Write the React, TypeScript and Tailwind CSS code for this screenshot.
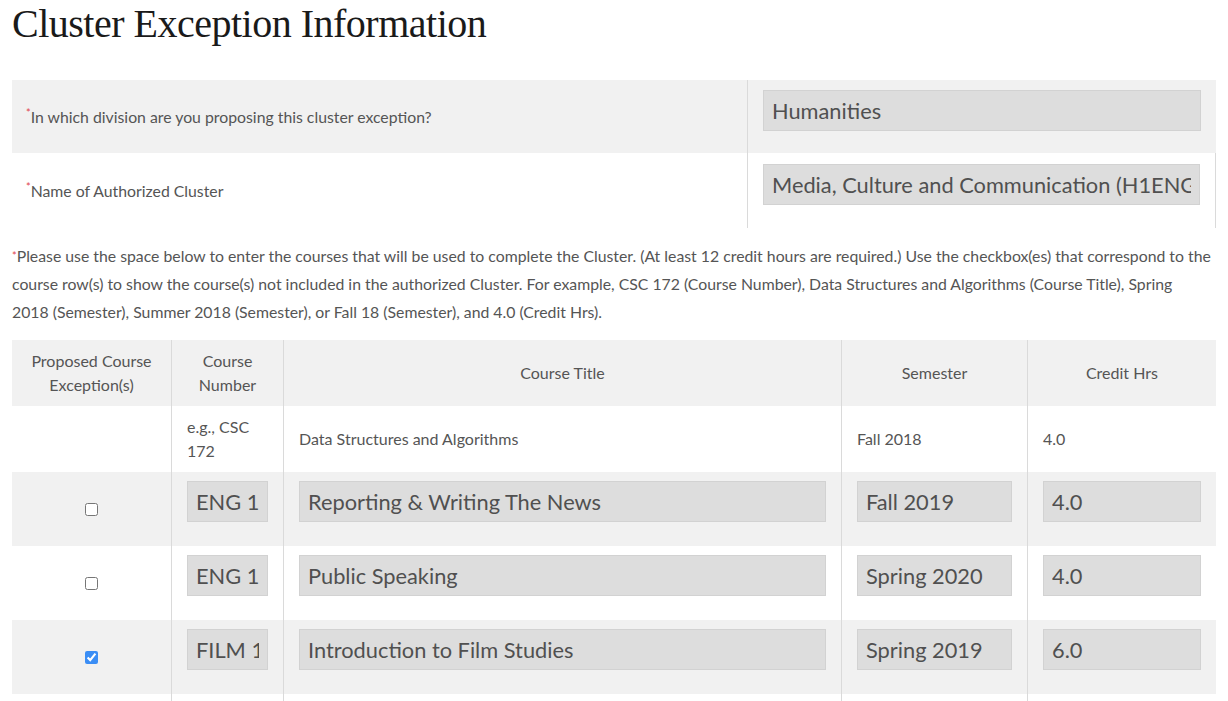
import React from 'react';

const rows = [
  { num: 'ENG 131', title: 'Reporting & Writing The News', sem: 'Fall 2019', hrs: '4.0', checked: false },
  { num: 'ENG 135', title: 'Public Speaking', sem: 'Spring 2020', hrs: '4.0', checked: false },
  { num: 'FILM 101', title: 'Introduction to Film Studies', sem: 'Spring 2019', hrs: '6.0', checked: true },
];

const Field = ({ value }: { value: string }) => (
  <input
    readOnly
    value={value}
    className="block h-[41px] w-full border border-[#d2d2d2] bg-[#dddddd] px-2 text-[21.8px] text-[#505050] outline-none"
  />
);

const Req = () => <span className="align-top text-[11px] text-[#e0424b]">*</span>;

const App = () => {
  return (
    <div className="min-h-[701px] bg-white px-3 text-[#555]" style={{ fontFamily: 'Lato, "Open Sans", sans-serif' }}>
      <h1
        className="pt-[1px] text-[40px] leading-[46px] tracking-[-0.5px] text-[#1a1a1a]"
        style={{ fontFamily: '"Liberation Serif", "Times New Roman", serif' }}
      >
        Cluster Exception Information
      </h1>

      <div className="mt-[33px]">
        <div className="flex h-[73px] bg-[#f1f1f1]">
          <div className="flex w-[736px] items-center border-r border-[#dadada] pl-[14px] text-[15.8px]">
            <p><Req />In which division are you proposing this cluster exception?</p>
          </div>
          <div className="flex-1 px-[15px] pt-[10px]">
            <Field value="Humanities" />
          </div>
        </div>
        <div className="flex h-[75px]">
          <div className="flex w-[736px] items-center border-r border-[#dadada] pl-[14px] text-[15.8px]">
            <p><Req />Name of Authorized Cluster</p>
          </div>
          <div className="flex-1 border-r border-[#dadada] px-[15px] pt-[11px]">
            <Field value="Media, Culture and Communication (H1ENG)" />
          </div>
        </div>
      </div>

      <p className="mt-[14px] max-w-[1200px] text-[15.8px] leading-[28px]">
        <Req />Please use the space below to enter the courses that will be used to complete the Cluster. (At least 12 credit hours are required.) Use the checkbox(es) that correspond to the course row(s) to show the course(s) not included in the authorized Cluster. For example, CSC 172 (Course Number), Data Structures and Algorithms (Course Title), Spring 2018 (Semester), Summer 2018 (Semester), or Fall 18 (Semester), and 4.0 (Credit Hrs).
      </p>

      <div className="mt-[14px]">
        <div className="grid h-[66px] grid-cols-[160px_112px_558px_186px_188px] bg-[#f1f1f1] text-center text-[16px] leading-[24px]">
          <div className="flex items-center justify-center border-r border-[#dadada]">Proposed Course<br />Exception(s)</div>
          <div className="flex items-center justify-center border-r border-[#dadada]">Course<br />Number</div>
          <div className="flex items-center justify-center border-r border-[#dadada]">Course Title</div>
          <div className="flex items-center justify-center border-r border-[#dadada]">Semester</div>
          <div className="flex items-center justify-center">Credit Hrs</div>
        </div>

        <div className="grid h-[66px] grid-cols-[160px_112px_558px_186px_188px] text-[16px] leading-[24px]">
          <div className="border-r border-[#dadada]" />
          <div className="flex items-center border-r border-[#dadada] px-[15px]">e.g., CSC 172</div>
          <div className="flex items-center border-r border-[#dadada] px-[15px]">Data Structures and Algorithms</div>
          <div className="flex items-center border-r border-[#dadada] px-[15px]">Fall 2018</div>
          <div className="flex items-center px-[15px]">4.0</div>
        </div>

        {rows.map((row, key) => (
          <div
            key={key}
            className={`grid h-[74px] grid-cols-[160px_112px_558px_186px_188px] ${key % 2 === 0 ? 'bg-[#f1f1f1]' : 'bg-white'}`}
          >
            <div className="flex items-center justify-center border-r border-[#dadada]">
              <input type="checkbox" defaultChecked={row.checked} className="h-[13px] w-[13px] accent-[#3b8ef5]" />
            </div>
            <div className="border-r border-[#dadada] px-[15px] pt-[9px]">
              <Field value={row.num} />
            </div>
            <div className="border-r border-[#dadada] px-[15px] pt-[9px]">
              <Field value={row.title} />
            </div>
            <div className="border-r border-[#dadada] px-[15px] pt-[9px]">
              <Field value={row.sem} />
            </div>
            <div className="px-[15px] pt-[9px]">
              <Field value={row.hrs} />
            </div>
          </div>
        ))}

        <div className="grid h-[20px] grid-cols-[160px_112px_558px_186px_188px]">
          <div className="border-r border-[#dadada]" />
          <div className="border-r border-[#dadada]" />
          <div className="border-r border-[#dadada]" />
          <div className="border-r border-[#dadada]" />
          <div />
        </div>
      </div>
    </div>
  );
};

export default App;
